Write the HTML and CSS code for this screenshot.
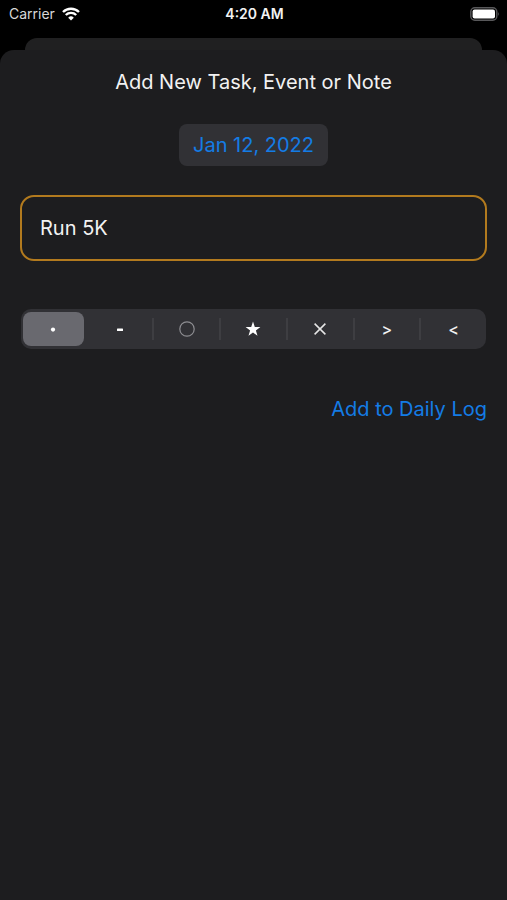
FILE: index.html
```
<!DOCTYPE html>
<html lang="en">
<head>
  <meta charset="UTF-8">
  <meta name="viewport" content="width=device-width, initial-scale=1">
  <title>Add New Task, Event or Note</title>
  <link rel="stylesheet" href="styles.css">
</head>
<body>

  <header class="status-bar">
    <div class="carrier">
      <span>Carrier</span>
      <svg class="wifi" viewBox="0 0 18 14" aria-hidden="true">
        <path d="M1 5 A11.5 11.5 0 0 1 17 5" />
        <path d="M3.8 8 A7.4 7.4 0 0 1 14.2 8" />
        <path class="wifi-dot" d="M9 13.6 L6.2 10.7 A4 4 0 0 1 11.8 10.7 Z" />
      </svg>
    </div>
    <div class="time">4:20 AM</div>
    <div class="battery">
      <svg viewBox="0 0 30 14" aria-hidden="true">
        <rect class="battery-case" x="0.8" y="0.8" width="26" height="12.4" rx="4" />
        <rect class="battery-level" x="2.6" y="2.6" width="22.4" height="8.8" rx="2" />
        <path class="battery-tip" d="M28.2 5 Q30 7 28.2 9 Z" />
      </svg>
    </div>
  </header>

  <div class="back-card"></div>

  <main class="sheet">
    <h1>Add New Task, Event or Note</h1>

    <button type="button" class="date">Jan 12, 2022</button>

    <input type="text" class="task" aria-label="Task" value="Run 5K">

    <div class="segments" role="radiogroup" aria-label="Entry type">
      <label class="segment">
        <input type="radio" name="type" aria-label="Task" checked>
        <svg viewBox="0 0 20 20"><circle class="fill" cx="10" cy="10.6" r="2.1" /></svg>
      </label>
      <label class="segment">
        <input type="radio" name="type" aria-label="Note">
        <svg viewBox="0 0 20 20"><rect class="fill" x="7" y="9.4" width="6" height="2.6" rx="0.6" /></svg>
      </label>
      <label class="segment">
        <input type="radio" name="type" aria-label="Event">
        <svg viewBox="0 0 20 20"><circle class="ring" cx="10" cy="10" r="7.2" /></svg>
      </label>
      <label class="segment">
        <input type="radio" name="type" aria-label="Important">
        <svg viewBox="0 0 20 20"><path class="fill" d="M10 2.6 L11.8 7.9 L17.4 8 L12.9 11.4 L14.5 16.7 L10 13.5 L5.5 16.7 L7.1 11.4 L2.6 8 L8.2 7.9 Z" /></svg>
      </label>
      <label class="segment">
        <input type="radio" name="type" aria-label="Done">
        <svg viewBox="0 0 20 20"><path class="line" d="M4.6 4.6 L15.4 15.4 M15.4 4.6 L4.6 15.4" /></svg>
      </label>
      <label class="segment">
        <input type="radio" name="type" aria-label="Migrated">
        <span>&gt;</span>
      </label>
      <label class="segment">
        <input type="radio" name="type" aria-label="Scheduled">
        <span>&lt;</span>
      </label>
    </div>

    <button type="button" class="add">Add to Daily Log</button>
  </main>

</body>
</html>
```
FILE: styles.css
```
* {
  box-sizing: border-box;
}

body {
  margin: 0;
  min-height: 100vh;
  display: flex;
  flex-direction: column;
  background: #000;
  color: #f2f2f2;
  font-family: Inter, "Liberation Sans", sans-serif;
  font-size: 20px;
  line-height: 24px;
}

button,
input {
  font: inherit;
}

.status-bar {
  display: grid;
  grid-template-columns: 1fr auto 1fr;
  align-items: center;
  height: 38px;
  padding: 0 7px 10px 9px;
  font-size: 14px;
  line-height: 20px;
}

.carrier {
  display: flex;
  align-items: center;
  gap: 7px;
  color: #d8d8d8;
}

.wifi {
  width: 18px;
  height: 14px;
  fill: none;
  stroke: #fff;
  stroke-width: 2.4;
}

.wifi .wifi-dot {
  fill: #fff;
  stroke: none;
}

.time {
  font-weight: 600;
}

.battery {
  display: flex;
  justify-content: flex-end;
}

.battery svg {
  width: 30px;
  height: 14px;
}

.battery-case {
  fill: none;
  stroke: #58585a;
  stroke-width: 1.4;
}

.battery-level {
  fill: #fff;
}

.battery-tip {
  fill: #58585a;
}

.back-card {
  height: 12px;
  margin: 0 25px;
  border-radius: 12px 12px 0 0;
  background: #202021;
}

.sheet {
  flex: 1;
  display: flex;
  flex-direction: column;
  padding: 20px;
  border-radius: 14px 14px 0 0;
  background: #1d1d1f;
}

h1 {
  margin: 0 0 30px;
  font-size: 20px;
  font-weight: 400;
  text-align: center;
}

.date {
  align-self: center;
  margin-bottom: 29px;
  padding: 9px 14px;
  border: none;
  border-radius: 8px;
  background: #313135;
  color: #147ce5;
}

.task {
  width: 100%;
  height: 66px;
  margin-bottom: 48px;
  padding: 0 18px;
  border: 2px solid #b27a1e;
  border-radius: 14px;
  background: transparent;
  color: #f2f2f2;
  outline: none;
}

.segments {
  display: grid;
  grid-template-columns: repeat(7, 1fr);
  gap: 6px;
  height: 40px;
  margin: 0 1px 48px;
  padding: 3px 2px;
  border-radius: 10px;
  background: #313135;
}

.segment {
  position: relative;
  display: flex;
  align-items: center;
  justify-content: center;
  border-radius: 8px;
  font-size: 16px;
  font-weight: 500;
  cursor: pointer;
}

.segment:has(input:checked) {
  background: #69696f;
}

.segment input {
  position: absolute;
  opacity: 0;
}

/* divider between two unselected segments */
.segment + .segment::before {
  content: "";
  position: absolute;
  top: 6px;
  bottom: 6px;
  left: -4px;
  width: 2px;
  background: #3e3e42;
}

.segment:has(input:checked)::before,
.segment:has(input:checked) + .segment::before {
  display: none;
}

.segment svg {
  width: 20px;
  height: 20px;
}

.fill {
  fill: #fff;
}

.ring {
  fill: none;
  stroke: #8e8e92;
  stroke-width: 1.2;
}

.line {
  fill: none;
  stroke: #e6e6e6;
  stroke-width: 1.5;
}

.add {
  align-self: flex-end;
  padding: 0;
  border: none;
  background: none;
  color: #147ce5;
}
```
